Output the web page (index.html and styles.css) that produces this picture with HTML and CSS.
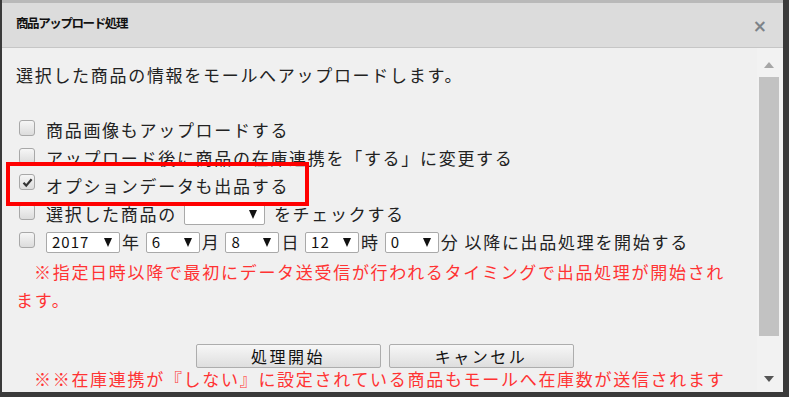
FILE: index.html
```html
<!DOCTYPE html>
<html lang="ja">
<head>
    <meta charset="UTF-8">
    <meta name="viewport" content="width=device-width, initial-scale=1.0">
    <title>商品アップロード処理</title>
    <link rel="stylesheet" href="styles.css">
</head>
<body>
    <div class="screen">
        <div class="dialog">
            <div class="dialog-head">
                <span class="dialog-title">商品アップロード処理</span>
                <span class="close">×</span>
            </div>
            <div class="dialog-body">
                <div class="content">
                    <p class="intro">選択した商品の情報をモールへアップロードします。</p>
                    <div class="options">
                        <div class="option"><span class="check"></span>商品画像もアップロードする</div>
                        <div class="option"><span class="check"></span>アップロード後に商品の在庫連携を「する」に変更する</div>
                        <div class="option highlight">
                            <span class="check checked">
                                <svg width="13" height="13" viewBox="0 0 13 13"><path d="M2.5 6.8 L5.2 9.6 L10.6 3.2" fill="none" stroke="#333" stroke-width="2.2"/></svg>
                            </span>オプションデータも出品する
                        </div>
                        <div class="option"><span class="check"></span>選択した商品の<span class="sel sel-blank"><i></i></span>をチェックする</div>
                        <div class="option">
                            <span class="check"></span>
                            <span class="sel sel-year">2017<i></i></span><span class="unit">年</span>
                            <span class="sel">6<i></i></span><span class="unit">月</span>
                            <span class="sel">8<i></i></span><span class="unit">日</span>
                            <span class="sel">12<i></i></span><span class="unit">時</span>
                            <span class="sel">0<i></i></span><span class="unit">分</span>
                            <span class="tail">以降に出品処理を開始する</span>
                        </div>
                    </div>
                    <p class="notice">※指定日時以降で最初にデータ送受信が行われるタイミングで出品処理が開始されます。</p>
                    <div class="actions">
                        <button class="btn">処理開始</button>
                        <button class="btn">キャンセル</button>
                    </div>
                    <p class="notice notice-bottom">※※在庫連携が『しない』に設定されている商品もモールへ在庫数が送信されます</p>
                </div>
                <div class="scrollbar">
                    <span class="arrow arrow-up"></span>
                    <span class="thumb"></span>
                    <span class="arrow arrow-down"></span>
                </div>
            </div>
        </div>
    </div>
</body>
</html>
```

FILE: styles.css
```css
body {
    margin: 0;
    background-color: #3a3a3a;
    font-family: "Noto Sans CJK JP", "Noto Sans", sans-serif;
}

.screen {
    width: 789px;
    height: 397px;
    overflow: hidden;
}

.dialog {
    margin: 0 6px 0 2px;
    height: 389px;
    border-top: 3px solid #b9b9b9;
    background-color: #f0f0f0;
    display: flex;
    flex-direction: column;
}

.dialog-head {
    height: 44px;
    flex-shrink: 0;
    background-color: #dcdcdc;
    border-bottom: 1px solid #c6c6c6;
    display: flex;
    align-items: center;
    justify-content: space-between;
    padding: 0 16px 0 14px;
}

.dialog-title {
    font-size: 12.5px;
    font-weight: bold;
    letter-spacing: -1.4px;
    color: #111;
    margin-top: -6px;
}

.close {
    font-family: "DejaVu Sans", sans-serif;
    font-size: 17px;
    font-weight: bold;
    color: #7d8389;
    margin-top: 2px;
}

.dialog-body {
    flex: 1;
    display: flex;
    overflow: hidden;
}

.content {
    flex: 1;
    padding: 13px 20px 0 14px;
    font-size: 17px;
    letter-spacing: 1.7px;
    color: #222;
    line-height: 28px;
}

.intro {
    margin: 0;
}

.options {
    margin-top: 27px;
}

.option {
    height: 28px;
    display: flex;
    align-items: center;
    white-space: nowrap;
}

.highlight {
    position: relative;
}

.highlight::after {
    content: "";
    position: absolute;
    left: -10px;
    top: -10px;
    width: 295px;
    height: 36px;
    border: 4px solid #ff0000;
}

.check {
    width: 14px;
    height: 14px;
    margin: -5px 11px 0 3px;
    border: 1px solid #a8a8a8;
    border-radius: 3px;
    background: linear-gradient(#f6f6f6, #dcdcdc);
    display: flex;
    align-items: center;
    justify-content: center;
    flex-shrink: 0;
}

.checked {
    margin-top: -8px;
}

.sel {
    height: 21px;
    width: 54px;
    box-sizing: border-box;
    margin-left: 5px;
    padding: 0 7px 0 5px;
    background-color: #fff;
    border: 1px solid #a9a9a9;
    border-radius: 2px;
    display: inline-flex;
    align-items: center;
    font-size: 15px;
    letter-spacing: 1px;
    color: #111;
}

.sel i {
    margin-left: auto;
    width: 0;
    height: 0;
    border-left: 4px solid transparent;
    border-right: 4px solid transparent;
    border-top: 9px solid #111;
}

.sel-blank {
    width: 81px;
    margin: 0 9px 0 7px;
}

.sel-year {
    width: 74px;
    margin-left: 0;
}

.unit {
    margin-left: 2px;
}

.tail {
    margin-left: 5px;
}

.notice {
    margin: 2px 0 0;
    text-indent: 18px;
    color: #ff3333;
}

.actions {
    margin-top: 30px;
    display: flex;
    justify-content: center;
    gap: 8px;
    padding-left: 16px;
}

.btn {
    width: 185px;
    height: 24px;
    padding: 0;
    border: 1px solid #adadad;
    border-radius: 2px;
    background: linear-gradient(#f7f7f7, #dedede);
    font-family: "Noto Sans CJK JP", sans-serif;
    font-size: 16px;
    letter-spacing: 2.5px;
    color: #111;
    line-height: 22px;
}

.notice-bottom {
    margin-top: 1px;
    line-height: 20px;
    white-space: nowrap;
}

.scrollbar {
    width: 26px;
    flex-shrink: 0;
    background-color: #f2f2f2;
    display: flex;
    flex-direction: column;
    align-items: center;
    padding: 14px 2px 10px 0;
    box-sizing: border-box;
}

.arrow {
    width: 0;
    height: 0;
    border-left: 5px solid transparent;
    border-right: 5px solid transparent;
}

.arrow-up {
    border-bottom: 6px solid #a6a6a6;
}

.arrow-down {
    margin-top: auto;
    border-top: 6px solid #555;
}

.thumb {
    width: 20px;
    height: 259px;
    margin-top: 9px;
    background-color: #c2c2c2;
}
```
